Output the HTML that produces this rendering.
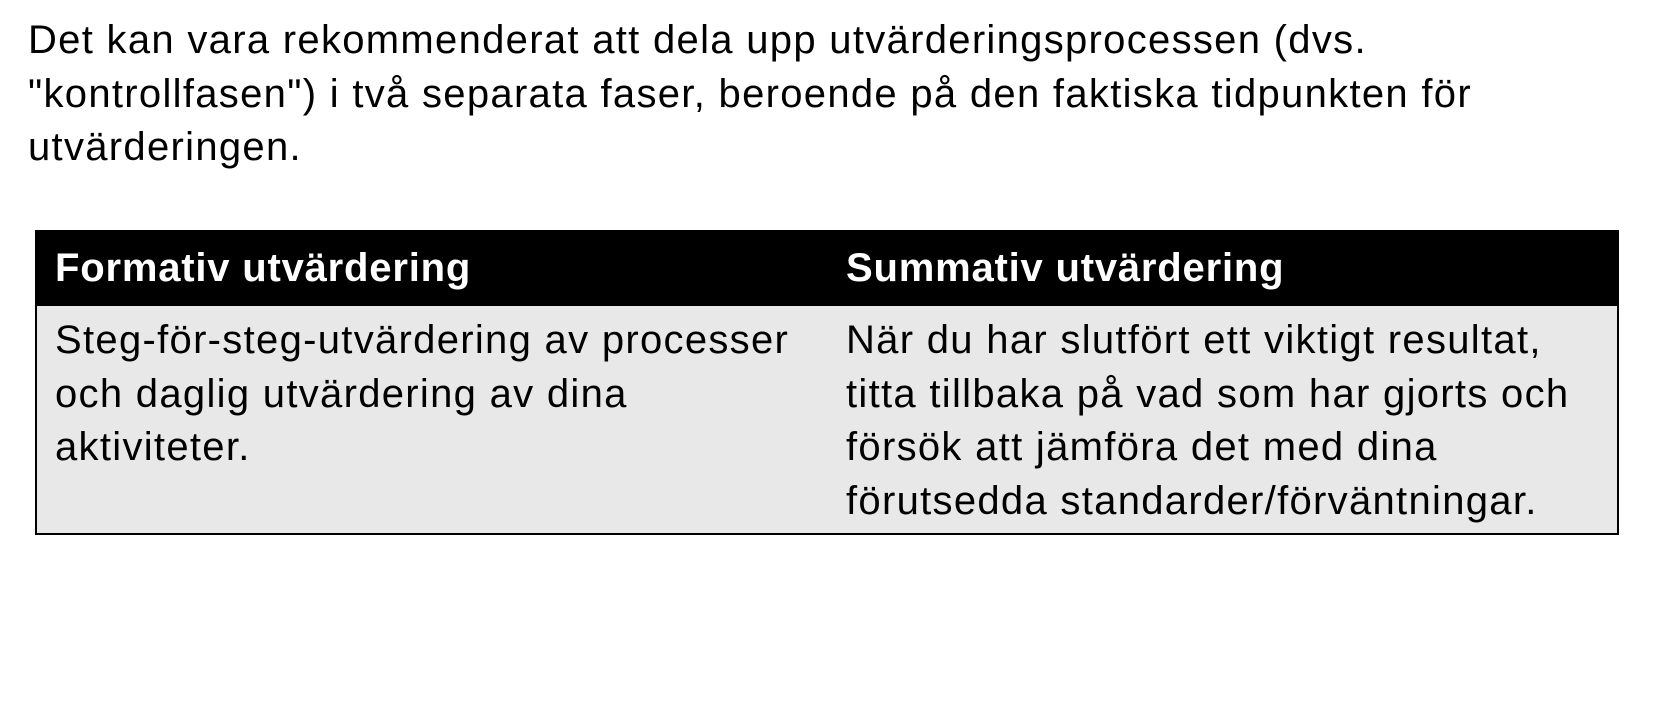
<!DOCTYPE html>
<html><head><meta charset="utf-8"><style>
html,body{margin:0;padding:0;background:#fff;width:1680px;height:706px;overflow:hidden}
body{font-family:"Liberation Sans",sans-serif;color:#000;position:relative}
.p{position:absolute;left:28px;top:14px;font-size:40px;line-height:53.5px;white-space:nowrap;letter-spacing:1.3px}
.t{position:absolute;left:35px;top:230px;width:1584px;height:305px;border:2px solid #000;box-sizing:border-box;background:#e8e8e8}
.h{position:absolute;left:0;top:0;right:0;height:74px;background:#000}
.c{position:absolute;font-size:40px;line-height:53.5px;white-space:nowrap;letter-spacing:1.3px}
.hd{color:#fff;font-weight:bold;top:10px;letter-spacing:0.8px}
</style></head><body>
<div class="p">Det kan vara rekommenderat att dela upp utvärderingsprocessen (dvs.<br>"kontrollfasen") i två separata faser, beroende på den faktiska tidpunkten för<br>utvärderingen.</div>
<div class="t">
<div class="h"></div>
<div class="c hd" style="left:18px">Formativ utvärdering</div>
<div class="c hd" style="left:809px">Summativ utvärdering</div>
<div class="c" style="left:18px;top:82px">Steg-för-steg-utvärdering av processer<br>och daglig utvärdering av dina<br>aktiviteter.</div>
<div class="c" style="left:809px;top:82px">När du har slutfört ett viktigt resultat,<br>titta tillbaka på vad som har gjorts och<br>försök att jämföra det med dina<br>förutsedda standarder/förväntningar.</div>
</div>
</body></html>
